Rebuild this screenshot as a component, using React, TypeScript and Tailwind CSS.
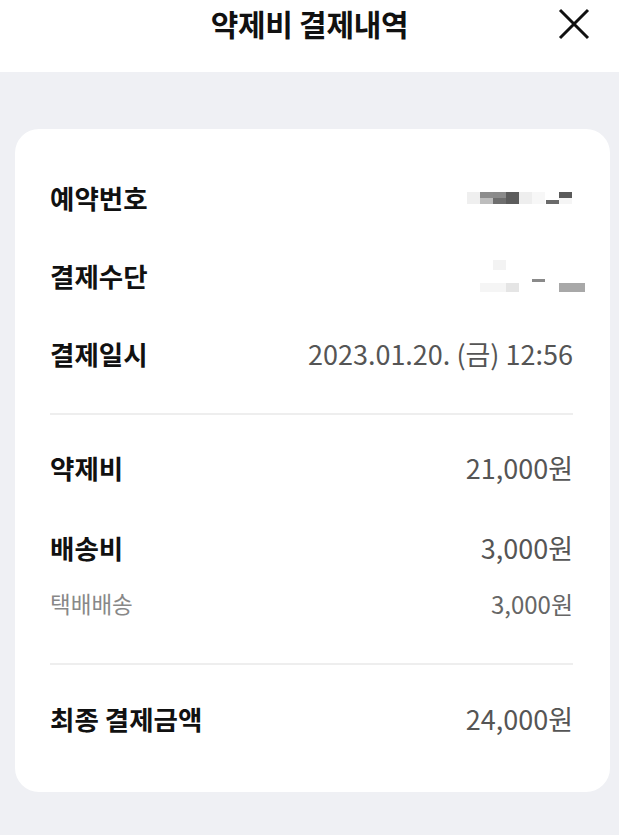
const font = { fontFamily: '"Noto Sans CJK KR", "Noto Sans", sans-serif' };

type Cell = [number, number, number, number, string];

// redacted mosaic: [left, top, width, height, color] inside a 118x34 box
function Blocks({ cells }: { cells: Cell[] }) {
  return (
    <div className="relative mr-[-12px] h-[34px] w-[118px]">
      {cells.map(([l, t, w, h, c], i) => (
        <div
          key={i}
          className="absolute"
          style={{ left: l, top: t, width: w, height: h, background: c }}
        />
      ))}
    </div>
  );
}

function Row({
  label,
  children,
  className,
}: {
  label: string;
  children: React.ReactNode;
  className: string;
}) {
  return (
    <div className={`flex items-center justify-between ${className}`}>
      <span className="text-[26.5px] font-bold text-[#111]">{label}</span>
      {children}
    </div>
  );
}

function Value({ children }: { children: React.ReactNode }) {
  return <span className="text-[27px] text-[#555]">{children}</span>;
}

export default function App() {
  return (
    <div className="min-h-[835px] bg-[#eff0f4]" style={font}>
      <header className="relative h-[72px] bg-white">
        <div className="flex h-[46px] items-center justify-center">
          <h1 className="text-[30px] font-bold tracking-[-0.3px] text-[#111]">약제비 결제내역</h1>
        </div>
        <button className="absolute right-[29px] top-[8px] h-[32px] w-[32px]">
          <svg viewBox="0 0 32 32" className="h-full w-full" fill="none" stroke="#111" strokeWidth="3">
            <path d="M2 2 L30 30 M30 2 L2 30" />
          </svg>
        </button>
      </header>

      <div className="ml-[15px] mr-[9px] mt-[57px] rounded-[24px] bg-white pb-[53px] pl-[35px] pr-[37px] pt-[30px]">
        <Row label="예약번호" className="h-[78px]">
          <Blocks
            cells={[
              [0, 11, 13, 12, "#efefef"],
              [13, 11, 13, 6, "#8c8c8c"],
              [13, 17, 13, 6, "#bdbdbd"],
              [26, 11, 13, 6, "#8a8a8a"],
              [26, 17, 13, 6, "#6e6e6e"],
              [39, 11, 13, 12, "#5c5c5c"],
              [52, 11, 13, 12, "#eeeeee"],
              [65, 11, 13, 12, "#f7f7f7"],
              [79, 19, 13, 4, "#6a6a6a"],
              [92, 11, 13, 6, "#5a5a5a"],
              [92, 17, 13, 6, "#f5f5f5"],
            ]}
          />
        </Row>
        <Row label="결제수단" className="h-[78px]">
          <Blocks
            cells={[
              [26, 1, 13, 10, "#f3f3f3"],
              [13, 24, 26, 9, "#f5f5f5"],
              [39, 24, 13, 9, "#e5e5e5"],
              [65, 20, 13, 3, "#8a8a8a"],
              [92, 24, 26, 9, "#a8a8a8"],
            ]}
          />
        </Row>
        <Row label="결제일시" className="h-[78px]">
          <Value>2023.01.20. (금) 12:56</Value>
        </Row>

        <div className="mt-[20px] h-[2px] bg-[#eeeeee]" />

        <Row label="약제비" className="mt-[33px] h-[40px]">
          <Value>21,000원</Value>
        </Row>
        <Row label="배송비" className="mt-[40px] h-[40px]">
          <Value>3,000원</Value>
        </Row>
        <div className="mt-[20px] flex h-[32px] items-center justify-between">
          <span className="text-[22.5px] text-[#888]">택배배송</span>
          <span className="text-[24px] text-[#666]">3,000원</span>
        </div>

        <div className="mt-[43px] h-[2px] bg-[#eeeeee]" />

        <Row label="최종 결제금액" className="mt-[34px] h-[40px]">
          <Value>24,000원</Value>
        </Row>
      </div>
    </div>
  );
}
